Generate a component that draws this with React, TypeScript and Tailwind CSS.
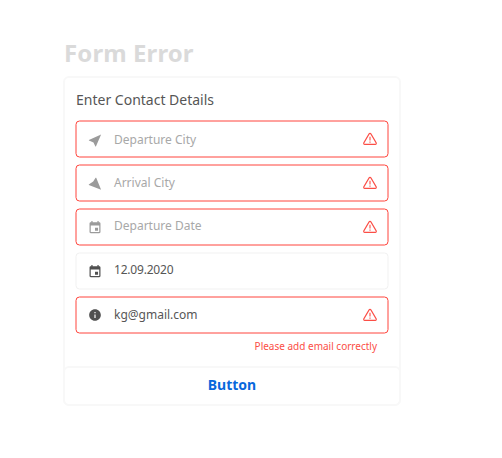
import React from "react";

type FieldProps = {
  icon: React.ReactNode;
  text: string;
  filled?: boolean;
  error?: boolean;
  textClass?: string;
};

function WarningIcon() {
  return (
    <svg width="16" height="14" viewBox="0 0 16 14" fill="none" stroke="#fb4e46" strokeWidth="1.1" strokeLinejoin="round">
      <path d="M7.1 1.9 1.8 10.9a1 1 0 0 0 .9 1.5h10.6a1 1 0 0 0 .9-1.5L8.9 1.9a1.05 1.05 0 0 0-1.8 0Z" />
      <path d="M8 4.8v3.7M8 9.6v1.2" />
    </svg>
  );
}

function DepartIcon() {
  return (
    <svg width="14" height="14" viewBox="0 0 14 14" fill="currentColor">
      <path d="M13.1 1.6.9 6.9v.6l4.6 1.9 1.9 4.1h.5L13.1 1.6Z" />
    </svg>
  );
}

function ArriveIcon() {
  return (
    <svg width="14" height="14" viewBox="0 0 14 14" fill="currentColor">
      <path d="M13.1 12.8 8.2.8h-.6L5.2 4.6.8 7.5v.5l12.3 4.8Z" />
    </svg>
  );
}

function CalendarIcon() {
  return (
    <svg width="14" height="14" viewBox="1.5 0.8 21 23" fill="currentColor">
      <path d="M17 12h-5v5h5v-5zM16 1v2H8V1H6v2H5c-1.11 0-1.99.9-1.99 2L3 19c0 1.1.89 2 2 2h14c1.1 0 2-.9 2-2V5c0-1.1-.9-2-2-2h-1V1h-2zm3 18H5V8h14v11z" />
    </svg>
  );
}

function InfoIcon() {
  return (
    <svg className="-mt-px mb-px" width="14" height="14" viewBox="0 0 24 24" fill="currentColor">
      <path d="M12 2C6.48 2 2 6.48 2 12s4.48 10 10 10 10-4.48 10-10S17.52 2 12 2zm1 15h-2v-6h2v6zm0-8h-2V7h2v2z" />
    </svg>
  );
}

function Field({ icon, text, filled, error, textClass = "mb-px" }: FieldProps) {
  return (
    <div
      className={`relative flex h-[38px] items-center pr-[11px] pl-[13px] before:pointer-events-none before:absolute before:top-0 before:left-0 before:h-[37px] before:w-[313px] before:translate-[0.5px] before:rounded-[4px] before:border ${
        error ? "before:border-[#ff453c]" : "before:border-[#f1f1f1]"
      }`}
    >
      <span className={`mt-[2px] ${filled ? "text-[#505050]" : "text-[#9b9b9b]"}`}>{icon}</span>
      <span className={`ml-3 flex-1 text-xs ${textClass} ${filled ? "text-[#565656]" : "text-[#a8a8a8]"}`}>{text}</span>
      {error && <WarningIcon />}
    </div>
  );
}

export default function App() {
  return (
    <main className="h-[458px] w-[502px] bg-white pt-9 pl-[63px] font-['Noto_Sans',sans-serif]">
      <h1 className="h-10 pl-px text-2xl leading-[33px] font-bold tracking-[0.1px] text-[#dadada]">Form Error</h1>
      <section className="h-[330px] w-[338px] rounded-md border-2 border-[#f8f8f8]">
        <div className="h-[288px] px-[10px] pt-[11px]">
          <h2 className="h-[31px] pl-px text-sm leading-[22px] text-[#565656]">Enter Contact Details</h2>
          <div className="flex flex-col gap-1.5">
            <Field icon={<DepartIcon />} text="Departure City" error textClass="mt-px" />
            <Field icon={<ArriveIcon />} text="Arrival City" error />
            <Field icon={<CalendarIcon />} text="Departure Date" error textClass="mb-[3px]" />
            <Field icon={<CalendarIcon />} text="12.09.2020" filled textClass="mb-[3px] tracking-[-0.2px]" />
            <Field icon={<InfoIcon />} text="kg@gmail.com" filled error />
          </div>
          <p className="pt-1 pr-3 text-right text-[10px] leading-4 text-[#fb4e46]">Please add email correctly</p>
        </div>
        <button className="-mx-0.5 h-10 w-[338px] rounded-md border-2 border-[#f8f8f8] pb-0.5 text-sm font-bold text-[#0868dc]">
          Button
        </button>
      </section>
    </main>
  );
}
